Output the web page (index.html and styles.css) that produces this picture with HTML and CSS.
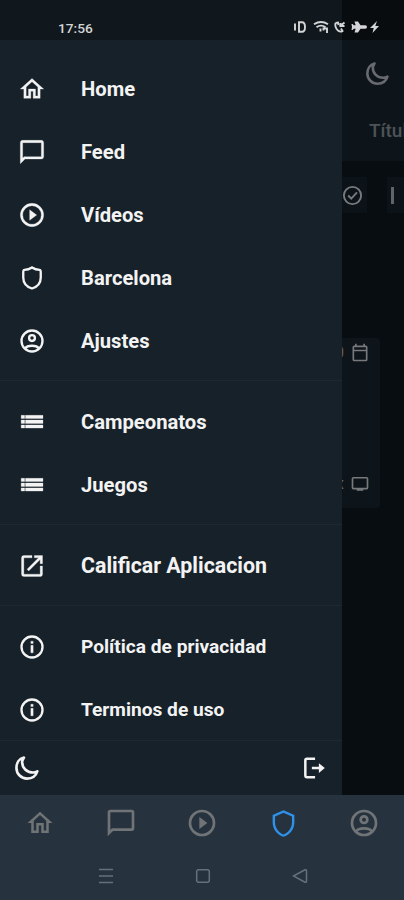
FILE: index.html
```
<!DOCTYPE html>
<html lang="es">
<head>
<meta charset="utf-8">
<title>Menú</title>
<link rel="stylesheet" href="styles.css">
</head>
<body>
<svg class="defs" aria-hidden="true">
  <symbol id="home" viewBox="0 0 24 24"><path d="M12 5.690l5 4.500V18h-2v-6H9v6H7v-7.810l5-4.500M12 3L2 12h3v8h6v-6h2v6h6v-8h3L12 3z"/></symbol>
  <symbol id="chat" viewBox="0 0 24 24"><path d="M20 2H4a2 2 0 0 0-2 2v18l4-4h14a2 2 0 0 0 2-2V4a2 2 0 0 0-2-2m0 14H5.200L4 17.200V4h16v12z"/></symbol>
  <symbol id="play" viewBox="0 0 24 24"><path d="M12 20a8 8 0 1 1 0-16 8 8 0 0 1 0 16m0-18a10 10 0 1 0 0 20 10 10 0 0 0 0-20m-2 14.500l6-4.500-6-4.500v9z"/></symbol>
  <symbol id="shield-round" viewBox="0 0 24 24"><path class="line" d="M12 3Q9 5 5.500 5Q4.500 5 4.500 7V11.500C4.500 16 7.500 19.500 12 21C16.500 19.500 19.500 16 19.500 11.500V7Q19.500 5 18.500 5Q15 5 12 3Z"/></symbol>
  <symbol id="shield" viewBox="0 0 24 24"><path d="M21 11c0 5.550-3.840 10.740-9 12-5.160-1.260-9-6.450-9-12V5l9-4 9 4v6m-9 10c3.750-1 7-5.460 7-9.780V6.300l-7-3.120L5 6.300v4.920C5 15.540 8.250 20 12 21z"/></symbol>
  <symbol id="account" viewBox="0 0 24 24"><circle class="line" cx="12" cy="12" r="9"/><circle class="line" cx="12" cy="9.500" r="2.500"/><path class="line" d="M6.200 18.300C8 15.300 16 15.300 17.800 18.300"/></symbol>
  <symbol id="list" viewBox="0 0 24 24"><path d="M2.700 6.300h3v2.700h-3zM6.400 6.300h15v2.700h-15zM2.700 10.300h3v2.900h-3zM6.400 10.300h15v2.900h-15zM2.700 14.500h3v2.700h-3zM6.400 14.500h15v2.700h-15z"/></symbol>
  <symbol id="open" viewBox="0 0 24 24"><path d="M19 19H5V5h7V3H5a2 2 0 0 0-2 2v14a2 2 0 0 0 2 2h14c1.100 0 2-.9 2-2v-7h-2v7zM14 3v2h3.590l-9.830 9.830 1.410 1.410L19 6.410V10h2V3h-7z"/></symbol>
  <symbol id="info" viewBox="0 0 24 24"><circle class="line" cx="12" cy="12" r="9"/><path d="M11 7h2v2h-2zM11 10.500h2V17h-2z"/></symbol>
  <symbol id="moon" viewBox="0 0 512 512"><path class="moon-line" d="M160 136c0-30.620 24-64 36-86C99.570 71.270 48 159.320 48 256c0 119.290 96.710 208 208 208 98.680 0 176.730-51.570 204-144-26.390 19.490-57.380 24-88 24-119.290 0-212-88.710-212-208z"/></symbol>
  <symbol id="logout" viewBox="0 0 24 24"><path class="exit-line" d="M13 3.500H5.500Q4 3.500 4 5V19Q4 20.500 5.500 20.500H13M10 12H18"/><path d="M16.500 7.500l5.500 4.500-5.500 4.500z"/></symbol>
  <symbol id="check" viewBox="0 0 24 24"><circle class="line" cx="12" cy="12" r="9"/><path class="line" d="M7.500 12l3.200 3.200 6-6.500"/></symbol>
  <symbol id="calendar" viewBox="0 0 24 24"><path d="M19 3h-1V1h-2v2H8V1H6v2H5a2 2 0 0 0-2 2v15a2 2 0 0 0 2 2h14a2 2 0 0 0 2-2V5a2 2 0 0 0-2-2m0 17H5V10h14v10M5 8V5h14v3z"/></symbol>
  <symbol id="tv" viewBox="0 0 24 24"><path d="M20 3.500H4a2 2 0 0 0-2 2v11a2 2 0 0 0 2 2h4v1.500h8v-1.500h4a2 2 0 0 0 2-2v-11a2 2 0 0 0-2-2m0 13H4v-11h16v11z"/></symbol>
</svg>

<div class="phone">
  <div class="page">
    <header class="page-head">
      <svg class="page-moon"><use href="#moon"/></svg>
      <div class="tab">Títulos</div>
    </header>
    <div class="filters">
      <span class="chip"><svg><use href="#check"/></svg></span>
      <span class="chip chip-next"><i></i></span>
    </div>
    <section class="card">
      <div class="card-row"><span>0</span><svg><use href="#calendar"/></svg></div>
      <div class="card-row"><span>x</span><svg><use href="#tv"/></svg></div>
    </section>
  </div>

  <aside class="drawer">
    <nav class="menu">
      <div class="group">
        <a class="item"><svg><use href="#home"/></svg><span>Home</span></a>
        <a class="item"><svg><use href="#chat"/></svg><span>Feed</span></a>
        <a class="item"><svg><use href="#play"/></svg><span>Vídeos</span></a>
        <a class="item"><svg><use href="#shield-round"/></svg><span>Barcelona</span></a>
        <a class="item"><svg><use href="#account"/></svg><span>Ajustes</span></a>
      </div>
      <div class="group">
        <a class="item"><svg><use href="#list"/></svg><span>Campeonatos</span></a>
        <a class="item"><svg><use href="#list"/></svg><span>Juegos</span></a>
      </div>
      <div class="group">
        <a class="item"><svg><use href="#open"/></svg><span class="rate">Calificar Aplicacion</span></a>
      </div>
      <div class="group">
        <a class="item"><svg><use href="#info"/></svg><span class="policy">Política de privacidad</span></a>
        <a class="item"><svg><use href="#info"/></svg><span class="policy">Terminos de uso</span></a>
      </div>
    </nav>
    <footer class="drawer-foot">
      <svg class="foot-moon"><use href="#moon"/></svg>
      <svg class="foot-exit"><use href="#logout"/></svg>
    </footer>
  </aside>

  <div class="status">
    <span class="clock">17:56</span>
    <svg class="status-icons" viewBox="0 0 88 16">
      <path class="s-line" d="M1 4.500v7M5 3.200h3Q11 3.200 11 8t-3 4.800H5z"/>
      <path class="s-line" d="M20 5.200Q27 .8 34 5.200M22.500 8.200Q27 5 31.500 8.200M26.500 9.500v3M29.500 11.500v-2h3.500V14"/>
      <path class="s-line" d="M41.500 4q-1 4.500 2.500 7.500 2.500 2 4.500.5l-1.500-2.500M41.500 4l2.500-.5.5 2.500M45.500 7.500l5-4M46.500 4v3h4"/>
      <path d="M60.500 2.500H64l2.500 3.800h4.700q1.800 0 1.800 1.700t-1.800 1.700h-4.700L64 13.500h-3.500l1.200-3.800h-2l-1 1.300h-1.200l.5-3-.5-3h1.200l1 1.300h2z"/>
      <path d="M83 2l-7 7h3.700l-1.200 5L85 7h-3.700z"/>
    </svg>
  </div>

  <div class="bottom">
    <nav class="tabs">
      <svg class="tab-home"><use href="#home"/></svg>
      <svg><use href="#chat"/></svg>
      <svg><use href="#play"/></svg>
      <svg class="active"><use href="#shield"/></svg>
      <svg><use href="#account"/></svg>
    </nav>
    <div class="system">
      <svg viewBox="0 0 16 16"><path d="M1 1.500h14M1 8h14M1 14.500h14"/></svg>
      <svg viewBox="0 0 16 16"><rect x="1.700" y="1.700" width="12.600" height="12.600" rx="2"/></svg>
      <svg viewBox="0 0 16 16"><path d="M1.500 8L13 1.800q1.500-.5 1.500 1v10.400q0 1.500-1.500 1z"/></svg>
    </div>
  </div>
</div>
</body>
</html>
```
FILE: styles.css
```
* { box-sizing: border-box; }
body { margin: 0; background: #090f14; font-family: Roboto, sans-serif; }
svg { display: block; fill: currentColor; flex: none; }
.defs { position: absolute; width: 0; height: 0; }
.line { fill: none; stroke: currentColor; stroke-width: 2; }
.exit-line { fill: none; stroke: currentColor; stroke-width: 2.300; }
.moon-line { fill: none; stroke: currentColor; stroke-width: 52; stroke-linejoin: round; }

.phone { position: relative; width: 404px; height: 900px; overflow: hidden; display: flex; flex-direction: column; }

.page { flex: 1; background: #080d11; color: #606366; padding-top: 40px; }
.page-head { height: 121px; background: #0d151a; display: flex; flex-direction: column; padding: 21px 0 0 365px; color: #686a70; }
.page-moon { width: 25px; height: 25px; }
.tab { margin-top: 33px; margin-left: 4px; font-size: 19px; font-weight: 500; line-height: 24px; color: #4e5358; }
.filters { display: flex; gap: 20px; margin-top: 16px; padding-left: 332px; }
.chip { flex: none; width: 35px; height: 36px; background: #0c1318; display: flex; align-items: center; justify-content: flex-end; padding-right: 3px; }
.chip svg { width: 23px; height: 23px; color: #777a7d; }
.chip-next { justify-content: flex-start; padding-left: 4px; }
.chip-next i { width: 3px; height: 17px; background: #606367; }
.card { width: 380px; height: 170px; margin-top: 125px; background: #0d151a; border-radius: 0 4px 4px 0; display: flex; flex-direction: column; justify-content: space-between; padding: 5px 10px 14px 0; }
.card-row { display: flex; justify-content: flex-end; align-items: center; gap: 6px; font-size: 16px; line-height: 20px; }
.card-row svg { width: 20px; height: 20px; color: #77797d; }

.drawer { position: absolute; left: 0; top: 0; width: 342px; height: 795px; background: #172129; padding-top: 57px; display: flex; flex-direction: column; color: #f3f3f3; }
.group { padding-bottom: 8px; }
.group + .group { border-top: 1px solid #1c2932; padding-top: 9px; }
.group:last-child { padding-bottom: 0; margin-bottom: -1px; }
.item { display: flex; align-items: center; height: 63px; padding-left: 18px; gap: 35px; font-size: 20.200px; font-weight: 700; }
.item svg { width: 28px; height: 28px; stroke: currentColor; stroke-width: .25; }
.rate { font-size: 21.350px; }
.policy { font-size: 19.150px; }
.drawer-foot { flex: 1; border-top: 1px solid #1c2932; display: flex; align-items: center; justify-content: space-between; padding: 0 15px 0 14px; }
.foot-moon { width: 26px; height: 26px; }
.foot-exit { width: 26px; height: 26px; }

.status { position: absolute; left: 0; top: 0; width: 404px; height: 40px; background: linear-gradient(90deg, #11181d 342px, #080c0f 342px); display: flex; justify-content: space-between; align-items: flex-start; padding: 15px 22px 0 58px; color: #d4d5d6; }
.clock { font-size: 13.700px; line-height: 26px; font-weight: 500; }
.status-icons { width: 88px; height: 16px; margin-top: 4px; }
.s-line { fill: none; stroke: currentColor; stroke-width: 1.900; }

.bottom { position: relative; height: 105px; background: #26333f; }
.tabs { display: grid; grid-template-columns: repeat(5, 81px); justify-content: center; justify-items: center; align-items: center; height: 56px; color: #717477; }
.tabs svg { width: 32px; height: 32px; }
.tabs .tab-home { width: 30px; height: 30px; }
.tabs .active { width: 29px; height: 29px; color: #2f91e8; }
.system { display: grid; grid-template-columns: repeat(3, 97px); justify-content: center; justify-items: center; padding: 17px 0 0 1px; color: #65707b; }
.system svg { width: 16px; height: 16px; fill: none; stroke: currentColor; stroke-width: 1.500; }
```
